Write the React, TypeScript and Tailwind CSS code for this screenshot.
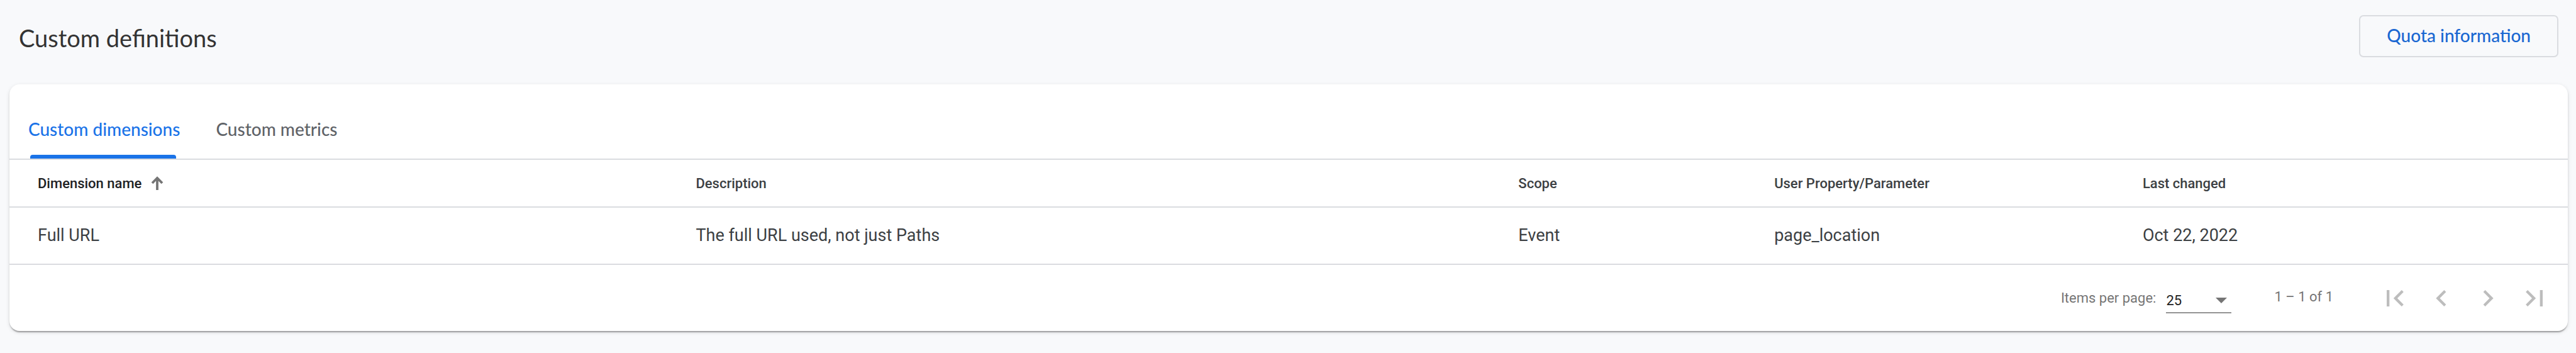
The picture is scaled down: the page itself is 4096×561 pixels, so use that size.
import { useState } from 'react';

type Dimension = {
  name: string;
  description: string;
  scope: string;
  parameter: string;
  lastChanged: string;
};

const dimensions: Dimension[] = [
  {
    name: 'Full URL',
    description: 'The full URL used, not just Paths',
    scope: 'Event',
    parameter: 'page_location',
    lastChanged: 'Oct 22, 2022',
  },
];

const pagerButtons = [
  { label: 'First page', path: 'M18.41 16.59L13.82 12l4.59-4.59L17 6l-6 6 6 6zM6 6h2v12H6z' },
  { label: 'Previous page', path: 'M15.41 7.41L14 6l-6 6 6 6 1.41-1.41L10.83 12z' },
  { label: 'Next page', path: 'M10 6L8.59 7.41 13.17 12l-4.58 4.59L10 18l6-6z' },
  { label: 'Last page', path: 'M5.59 7.41L10.18 12l-4.59 4.59L7 18l6-6-6-6zM16 6h2v12h-2z' },
];

function PageHeader() {
  return (
    <header className="flex items-start justify-between pt-6 pr-7 pl-[30px]">
      <h1 className="pt-[10px] font-['Lato',sans-serif] text-[38px] leading-[52px] text-[#333333]">
        Custom definitions
      </h1>
      <button
        type="button"
        className="h-[67px] rounded-[7px] border-2 border-[#dadce0] px-[42px] pb-1 font-['Lato',sans-serif] text-[28px] font-medium text-[#1967d2]"
      >
        Quota information
      </button>
    </header>
  );
}

function Tabs({ active, onSelect }: { active: string; onSelect: (tab: string) => void }) {
  return (
    <div role="tablist" className="flex gap-[57px] border-b-2 border-[#dadce0] pl-[30px]">
      {['Custom dimensions', 'Custom metrics'].map((tab) => (
        <button
          key={tab}
          type="button"
          role="tab"
          aria-selected={active === tab}
          onClick={() => onSelect(tab)}
          className={
            active === tab
              ? "flex h-[118px] flex-col justify-end font-['Lato',sans-serif] text-[28px] leading-9 font-medium text-[#1a73e8]"
              : "flex h-[118px] flex-col justify-end font-['Lato',sans-serif] text-[28px] leading-9 font-medium text-[#5f6368]"
          }
        >
          <span>{tab}</span>
          <span className="mt-[23px] flex h-[6px] self-stretch pr-[6px] pl-[3px]">
            {active === tab && <span className="flex-1 rounded-t-[4px] bg-[#1a73e8]" />}
          </span>
        </button>
      ))}
    </div>
  );
}

function DimensionTable() {
  return (
    <table className="w-full table-fixed text-left font-['Roboto',sans-serif] text-[#3c4043]">
      <colgroup>
        <col className="w-[25.7%]" />
        <col className="w-[32.15%]" />
        <col className="w-[10%]" />
        <col className="w-[14.4%]" />
        <col />
      </colgroup>
      <thead>
        <tr className="h-[75px] border-b-2 border-[#dadce0] text-[22px]">
          <th scope="col" aria-sort="ascending" className="pl-[45px] font-medium text-[#202124]">
            <button type="button" className="flex items-center gap-[15px]">
              Dimension name
              <svg viewBox="0 0 20 22" className="h-[22px] w-5" aria-hidden="true">
                <path
                  d="M10 22V3.5M2 11l8-8 8 8"
                  fill="none"
                  stroke="#757575"
                  strokeWidth="3.8"
                />
              </svg>
            </button>
          </th>
          <th scope="col" className="pl-[46px] font-medium">Description</th>
          <th scope="col" className="pl-[46px] font-medium">Scope</th>
          <th scope="col" className="pl-[46px] font-medium">User Property/Parameter</th>
          <th scope="col" className="pl-[46px] font-medium">Last changed</th>
        </tr>
      </thead>
      <tbody>
        {dimensions.map((d) => (
          <tr key={d.name} className="h-[91px] border-b-2 border-[#dadce0] text-[27px]">
            <td className="pl-[45px]">{d.name}</td>
            <td className="pl-[46px]">{d.description}</td>
            <td className="pl-[46px]">{d.scope}</td>
            <td className="pl-[46px]">{d.parameter}</td>
            <td className="pl-[46px]">{d.lastChanged}</td>
          </tr>
        ))}
      </tbody>
    </table>
  );
}

function Paginator() {
  const [size, setSize] = useState('25');
  return (
    <nav
      aria-label="Pagination"
      className="flex h-[105px] items-center justify-end pr-4 font-['Roboto',sans-serif] text-[22px] leading-7 text-[#757575]"
    >
      <label htmlFor="page-size" className="mr-4">
        Items per page:
      </label>
      <span className="flex items-center border-b-2 border-[#949494] pt-[14px] pb-1">
        <select
          id="page-size"
          value={size}
          onChange={(e) => setSize(e.target.value)}
          className="w-[79px] appearance-none bg-transparent text-[#212121] outline-none"
        >
          <option>10</option>
          <option>25</option>
          <option>50</option>
        </select>
        <svg viewBox="0 0 18 9" className="mr-[7px] h-[9px] w-[18px]" aria-hidden="true">
          <path d="M0 0h18L9 9z" fill="#757575" />
        </svg>
      </span>
      <span className="mr-[61px] ml-[68px] pb-1">1 – 1 of 1</span>
      {pagerButtons.map((b) => (
        <button
          key={b.label}
          type="button"
          aria-label={b.label}
          disabled
          className="flex w-[74px] justify-center"
        >
          <svg viewBox="0 0 24 24" className="size-[52px]" fill="#bdbdbd" aria-hidden="true">
            <path d={b.path} />
          </svg>
        </button>
      ))}
    </nav>
  );
}

export default function App() {
  const [tab, setTab] = useState('Custom dimensions');
  return (
    <div className="flex min-h-screen flex-col bg-[#f8f9fb]">
      <PageHeader />
      <main className="mt-[43px] mr-[13px] mb-9 ml-[15px] rounded-[16px] bg-white shadow-[0_4px_2px_-2px_rgba(0,0,0,0.2),0_2px_2px_0_rgba(0,0,0,0.14),0_2px_6px_0_rgba(0,0,0,0.12)]">
        <Tabs active={tab} onSelect={setTab} />
        <DimensionTable />
        <Paginator />
      </main>
    </div>
  );
}
